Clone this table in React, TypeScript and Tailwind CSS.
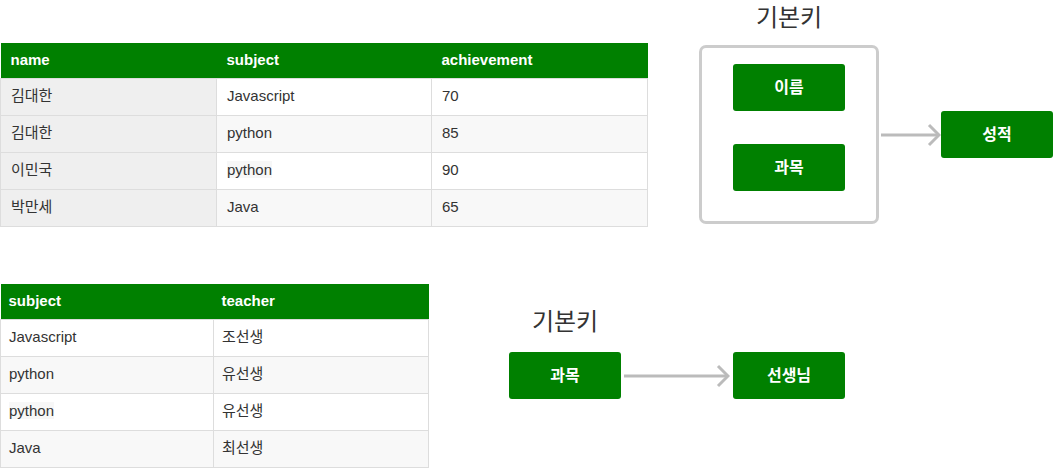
import React from "react";

const font = { fontFamily: '"Liberation Sans", "Noto Sans CJK KR", sans-serif' };

function Arrow({ w }: { w: number }) {
  return (
    <svg width={w} height={24} viewBox={`0 0 ${w} 24`} className="block">
      <line x1={0} y1={12} x2={w - 2} y2={12} stroke="#bbbbbb" strokeWidth={3} />
      <polyline
        points={`${w - 12},2 ${w - 2},12 ${w - 12},22`}
        fill="none"
        stroke="#bbbbbb"
        strokeWidth={3}
      />
    </svg>
  );
}

function GreenBox({ label }: { label: string }) {
  return (
    <div className="w-[112px] h-[47px] rounded-[3px] bg-[#008000] flex items-center justify-center text-white text-[16px] font-bold">
      {label}
    </div>
  );
}

const scores = [
  ["김대한", "Javascript", "70"],
  ["김대한", "python", "85"],
  ["이민국", "python", "90"],
  ["박만세", "Java", "65"],
];

const teachers = [
  ["Javascript", "조선생"],
  ["python", "유선생"],
  ["python", "유선생"],
  ["Java", "최선생"],
];

export default function App() {
  return (
    <div className="w-[1053px] h-[468px] bg-white text-[#333] overflow-hidden" style={font}>
      {/* top section */}
      <div className="flex h-[284px]">
        <table className="mt-[43px] w-[647px] table-fixed border-collapse text-[15px] self-start">
          <thead>
            <tr className="bg-[#008000] text-white h-[35px]">
              <th className="w-[216px] text-left font-bold pl-[10px]">name</th>
              <th className="w-[215px] text-left font-bold pl-[10px]">subject</th>
              <th className="w-[216px] text-left font-bold pl-[10px]">achievement</th>
            </tr>
          </thead>
          <tbody>
            {scores.map((r, i) => (
              <tr key={i} className={`h-[37px] ${i % 2 === 1 ? "bg-[#f8f8f8]" : "bg-white"}`}>
                <td className="bg-[#efefef] border border-[#dddddd] pl-[10px]">{r[0]}</td>
                <td className="border border-[#dddddd] pl-[10px]">
                  {i === 2 ? <span className="bg-[#f7f7f7]">{r[1]}</span> : r[1]}
                </td>
                <td className="border border-[#dddddd] pl-[10px]">{r[2]}</td>
              </tr>
            ))}
          </tbody>
        </table>

        <div className="ml-[51px] flex flex-col">
          <div className="w-[180px] text-center text-[24px] leading-[32px] mt-[2px] text-[#333]">기본키</div>
          <div className="mt-[11px] flex items-center">
            <div className="w-[180px] h-[179px] border-[3px] border-[#cccccc] rounded-[7px] flex flex-col items-center pt-[16px] gap-[33px]">
              <GreenBox label="이름" />
              <GreenBox label="과목" />
            </div>
            <div className="ml-[2px]">
              <Arrow w={60} />
            </div>
            <div>
              <GreenBox label="성적" />
            </div>
          </div>
        </div>
      </div>

      {/* bottom section */}
      <div className="flex">
        <table className="w-[428px] table-fixed border-collapse text-[15px] self-start">
          <thead>
            <tr className="bg-[#008000] text-white h-[35px]">
              <th className="w-[213px] text-left font-bold pl-[8px]">subject</th>
              <th className="w-[215px] text-left font-bold pl-[8px]">teacher</th>
            </tr>
          </thead>
          <tbody>
            {teachers.map((r, i) => (
              <tr key={i} className={`h-[37px] ${i % 2 === 1 ? "bg-[#f8f8f8]" : "bg-white"}`}>
                <td className="border border-[#dddddd] pl-[8px]">
                  {i === 2 ? <span className="bg-[#f7f7f7]">{r[0]}</span> : r[0]}
                </td>
                <td className="border border-[#dddddd] pl-[8px]">{r[1]}</td>
              </tr>
            ))}
          </tbody>
        </table>

        <div className="ml-[80px] flex flex-col">
          <div className="w-[112px] text-center text-[24px] leading-[32px] mt-[22px] text-[#333]">기본키</div>
          <div className="mt-[14px] flex items-center">
            <GreenBox label="과목" />
            <div className="ml-[3px]">
              <Arrow w={106} />
            </div>
            <div className="ml-[3px]">
              <GreenBox label="선생님" />
            </div>
          </div>
        </div>
      </div>
    </div>
  );
}
